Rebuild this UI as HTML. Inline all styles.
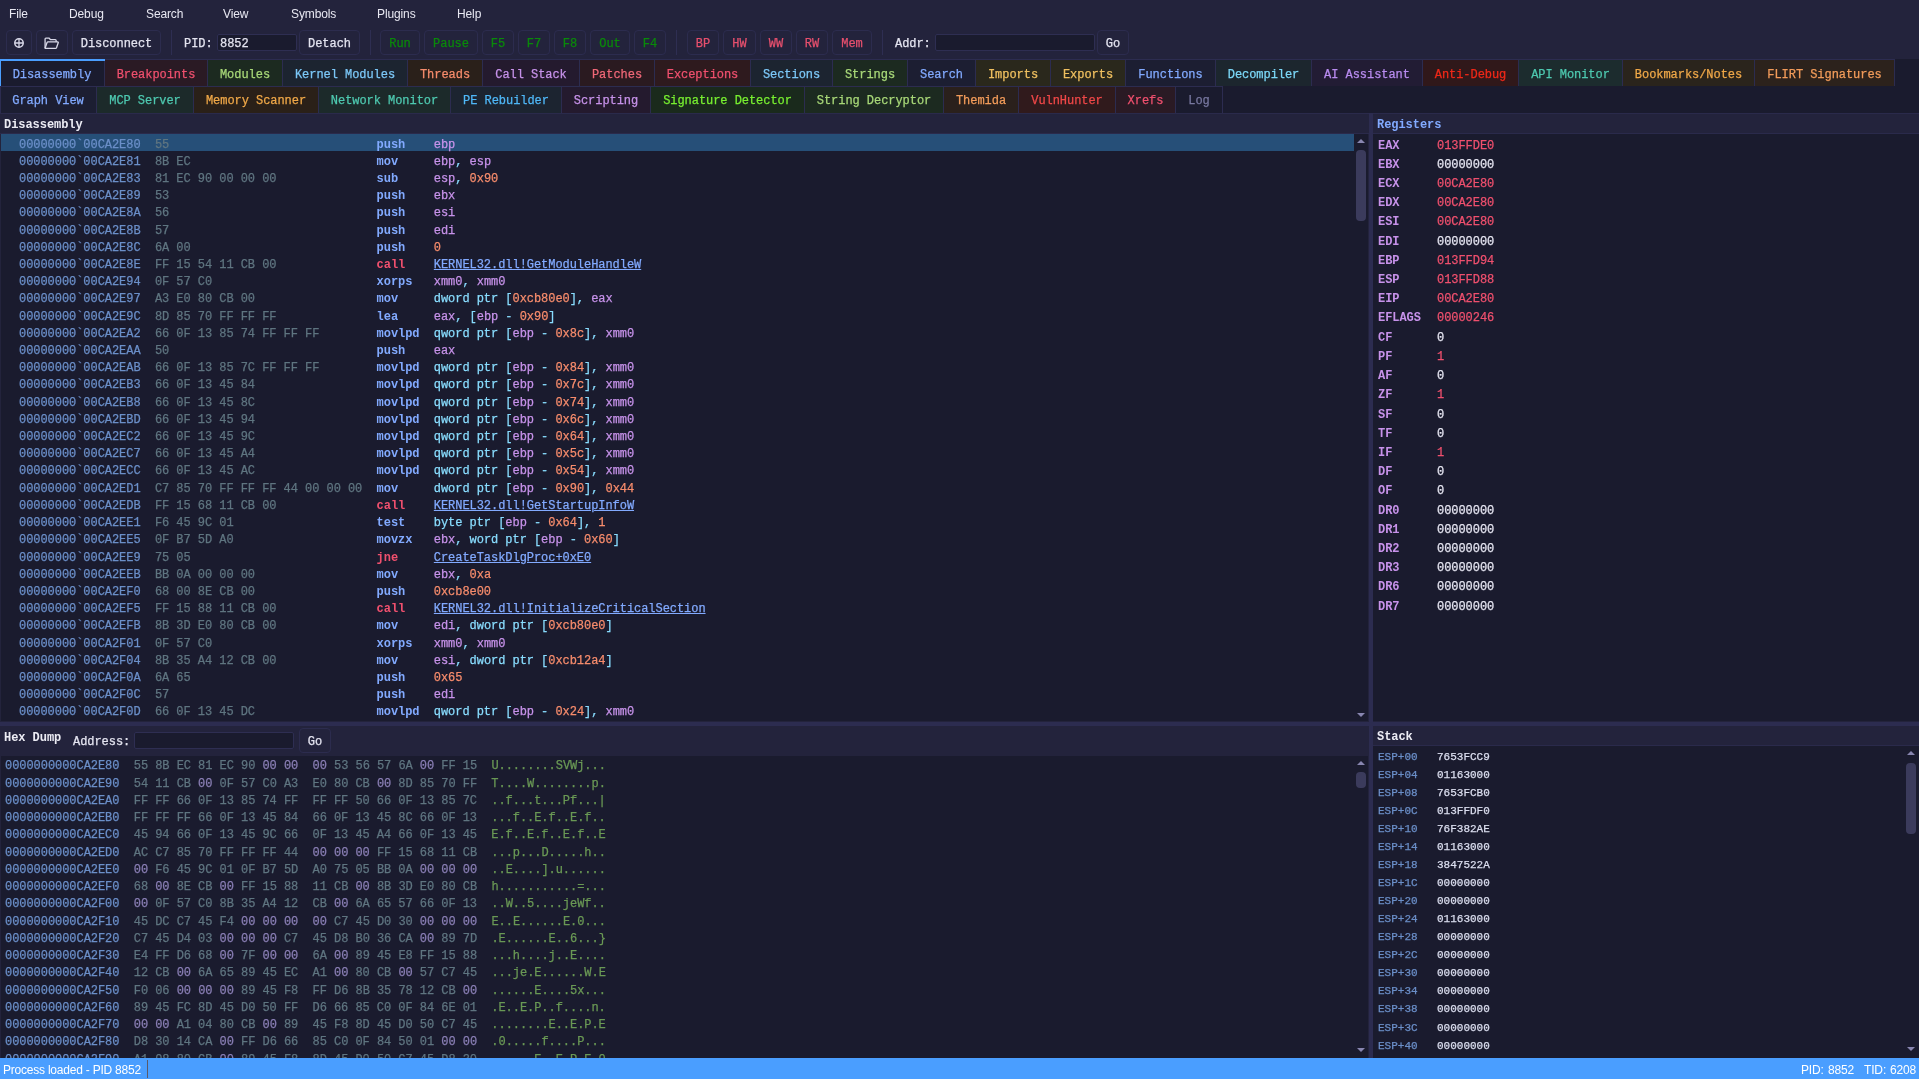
<!DOCTYPE html>
<html lang="en"><head><meta charset="utf-8"><title>Debugger</title>
<style>
*{box-sizing:border-box;margin:0;padding:0}
html,body{width:1919px;height:1079px;overflow:hidden;background:#23233c}
body{position:relative;font-family:"Liberation Mono", monospace;font-size:12px;color:#e4e4f0;letter-spacing:-0.05px;-webkit-text-stroke:0.25px}
i{font-style:normal}
#app{position:absolute;left:0;top:0;width:1919px;height:1079px;will-change:transform}
.abs{position:absolute}
#menu{position:absolute;left:0;top:0;width:1919px;height:28px;font-family:"Liberation Sans", sans-serif;font-size:12px;letter-spacing:-0.12px;color:#e8e8f2;-webkit-text-stroke:0}
#menu span{position:absolute;top:0;line-height:28px}
#tb{position:absolute;left:0;top:28px;width:1919px;height:31px}
.btn{position:absolute;top:2px;height:25px;border:1px solid #2c2c4e;border-radius:4px;line-height:27px;text-align:center;white-space:pre}
.sep{position:absolute;top:2px;width:1px;height:25px;background:#2e2e52}
.lbl{position:absolute;top:2px;line-height:29px;white-space:pre}
.inp{position:absolute;background:#1a1b2e;border:1px solid #2e2e52;border-radius:2px;line-height:19px;padding-left:2px;white-space:pre}
.g{color:#0a8a0a}
.rd{color:#e8506e}
#tabs{position:absolute;left:0;top:59px;width:1919px;height:55px;background:#1a1b2e}
.trow{position:absolute;left:0;display:flex;height:27px;border-top:1px solid #2c2c50}
.tab{height:26px;line-height:29px;text-align:center;border-right:1px solid #2c2c50;white-space:pre;flex:none}
.r1 .tab{line-height:31px}
.trow:not(.r1) .tab:first-child{box-shadow:inset 1px 0 0 #2c2c50}
.tab.act{position:relative;box-shadow:inset 1px 0 0 #4a9eff}
.tab.act:before{content:"";position:absolute;left:0;right:-1px;top:-1px;height:2px;background:#4a9eff}
.hdr{position:absolute;background:#23233c;border-top:1px solid #2a2a4b;border-bottom:1px solid #2a2a4b;font-weight:bold;white-space:pre}
b,.hdr,.bold{-webkit-text-stroke:0}
.pane{position:absolute;background:#1a1b2e;overflow:hidden}
.dr,.hr{position:absolute;left:0;height:17.21px;line-height:22px;white-space:pre}
.dr{width:1354px;padding-left:19px}
.dr.sel{background:#264f78}
.hr{padding-left:5px}
.a{color:#6b8fc9}
.b{color:#5f7580}
.z{color:#8a7fb5}
.s{color:#6a9955}
.m{color:#82aaff}
.mj{color:#f0506e}
.dr{color:#89ddff}
.r{color:#c792ea}
.n{color:#f78c6c}
.lk{color:#82aaff;text-decoration:underline;text-underline-offset:1px;text-decoration-thickness:1px}
.rr,.sr{position:absolute;white-space:pre}
.rr{left:1378px;height:19px;line-height:19px}
.rr b{color:#c792ea;position:absolute;left:0}
.rr span{position:absolute;left:59px}
.ch{color:#f0506e}
.nc{color:#e4e4f0}
.sr{left:1378px;height:18px;line-height:18px;font-size:11px;letter-spacing:0}
.sr i{position:absolute;left:0}
.sr span{position:absolute;left:59px;color:#dcdff0}
.split{position:absolute;background:#2c2c50}
.sb{position:absolute;width:14px;background:#1a1b2e}
.thumb{position:absolute;left:2px;width:10px;border-radius:4px;background:#3b3b5c}
.au,.ad{position:absolute;left:3px;width:0;height:0;border-left:4px solid transparent;border-right:4px solid transparent}
.au{border-bottom:4px solid #8886b0}
.ad{border-top:4px solid #8886b0}
#status{position:absolute;left:0;top:1058px;width:1919px;height:21px;background:#4a9eff;font-family:"Liberation Sans", sans-serif;font-size:12px;letter-spacing:-0.15px;color:#fff;line-height:24px;white-space:pre;-webkit-text-stroke:0}
</style></head>
<body><div id="app">
<div id="menu"><span style="left:9px">File</span><span style="left:69px">Debug</span><span style="left:146px">Search</span><span style="left:223px">View</span><span style="left:291px">Symbols</span><span style="left:377px">Plugins</span><span style="left:457px">Help</span></div>
<div id="tb">
<div class="btn" style="left:6px;width:26px"><svg width="12" height="12" viewBox="0 0 12 12" style="position:absolute;left:5.8px;top:5.8px" fill="none" stroke="#d8d8e8"><circle cx="6" cy="6" r="4.2" stroke-width="1.5"/><path d="M6 1.8v8.4M1.8 6h8.4" stroke-width="1.3"/></svg></div>
<div class="btn" style="left:36px;width:32px"><svg width="15.3" height="12.6" viewBox="0 0 17 14" style="position:absolute;left:6.6px;top:5.7px" fill="none" stroke="#d8d8e8" stroke-width="1.45" stroke-linejoin="round"><path d="M1.2 12.2V2.2q0-1 1-1h3.3l1.8 1.8h5.2q1 0 1 1v1.6"/><path d="M1.2 12.6l2.2-6.4q.3-.7 1-.7h10.8q.9 0 .6.9l-1.9 5.5q-.3.7-1 .7H1.2z"/></svg></div>
<div class="btn" style="left:72px;width:89px">Disconnect</div>
<div class="sep" style="left:171px"></div>
<div class="lbl" style="left:184px">PID:</div>
<div class="inp" style="left:217px;top:6px;width:80px;height:17px">8852</div>
<div class="btn" style="left:299px;width:61px">Detach</div>
<div class="sep" style="left:370px"></div>
<div class="btn g" style="left:380px;width:40px">Run</div>
<div class="btn g" style="left:424px;width:54px">Pause</div>
<div class="btn g" style="left:482px;width:32px">F5</div>
<div class="btn g" style="left:518px;width:32px">F7</div>
<div class="btn g" style="left:554px;width:32px">F8</div>
<div class="btn g" style="left:590px;width:40px">Out</div>
<div class="btn g" style="left:634px;width:32px">F4</div>
<div class="sep" style="left:676px"></div>
<div class="btn rd" style="left:687px;width:32px">BP</div>
<div class="btn rd" style="left:723px;width:33px">HW</div>
<div class="btn rd" style="left:760px;width:32px">WW</div>
<div class="btn rd" style="left:796px;width:32px">RW</div>
<div class="btn rd" style="left:832px;width:40px">Mem</div>
<div class="sep" style="left:882px"></div>
<div class="lbl" style="left:895px">Addr:</div>
<div class="inp" style="left:935px;top:6px;width:160px;height:17px"></div>
<div class="btn" style="left:1097px;width:32px">Go</div>
</div>
<div id="tabs">
<div class="trow r1" style="top:0"><div class="tab act" style="width:105px;color:#82aaff;background:#1a1b2e">Disassembly</div><div class="tab" style="width:103px;color:#f0506e;background:#2a1a24">Breakpoints</div><div class="tab" style="width:75px;color:#a8d878;background:#1c2a20">Modules</div><div class="tab" style="width:125px;color:#7cc8f8;background:#1c2430">Kernel Modules</div><div class="tab" style="width:75px;color:#f78c6c;background:#2a201a">Threads</div><div class="tab" style="width:97px;color:#c792ea;background:#241a2e">Call Stack</div><div class="tab" style="width:75px;color:#f06878;background:#2a1a20">Patches</div><div class="tab" style="width:96px;color:#f0506e;background:#2e1a1e">Exceptions</div><div class="tab" style="width:82px;color:#7cc8f8;background:#1c2430">Sections</div><div class="tab" style="width:75px;color:#a8d878;background:#1c2a20">Strings</div><div class="tab" style="width:68px;color:#82aaff;background:#1c1e32">Search</div><div class="tab" style="width:75px;color:#f0c060;background:#2a281c">Imports</div><div class="tab" style="width:75px;color:#f0c060;background:#2a281c">Exports</div><div class="tab" style="width:90px;color:#82aaff;background:#1c1e32">Functions</div><div class="tab" style="width:96px;color:#7cd8f8;background:#1c262e">Decompiler</div><div class="tab" style="width:111px;color:#b98cf0;background:#221c34">AI Assistant</div><div class="tab" style="width:96px;color:#f02818;background:#30181a">Anti-Debug</div><div class="tab" style="width:104px;color:#4ec9b0;background:#1c2c2e">API Monitor</div><div class="tab" style="width:132px;color:#f0a848;background:#2a241c">Bookmarks/Notes</div><div class="tab" style="width:140px;color:#f39c5a;background:#2c221c">FLIRT Signatures</div></div>
<div class="trow" style="top:27px"><div class="tab" style="width:97px;color:#82aaff;background:#1c1e32">Graph View</div><div class="tab" style="width:97px;color:#4ec9b0;background:#1c2a2a">MCP Server</div><div class="tab" style="width:125px;color:#f0a848;background:#2a2018">Memory Scanner</div><div class="tab" style="width:132px;color:#4ec9b0;background:#1c2a2a">Network Monitor</div><div class="tab" style="width:111px;color:#4fb8f8;background:#1c2430">PE Rebuilder</div><div class="tab" style="width:89px;color:#c792ea;background:#241a2e">Scripting</div><div class="tab" style="width:154px;color:#78f030;background:#1a2a1c">Signature Detector</div><div class="tab" style="width:139px;color:#a8d878;background:#1c2a20">String Decryptor</div><div class="tab" style="width:75px;color:#f39c5a;background:#2a201c">Themida</div><div class="tab" style="width:97px;color:#f04848;background:#301a1c">VulnHunter</div><div class="tab" style="width:60px;color:#f0506e;background:#2a1a24">Xrefs</div><div class="tab" style="width:47px;color:#7878a0;background:#1a1b2e">Log</div></div>
</div>

<!-- disassembly -->
<div class="hdr" style="left:0;top:113px;width:1369px;height:21px;line-height:22px;padding-left:4px;color:#ececf4">Disassembly</div>
<div class="pane" style="left:1px;top:134px;width:1367px;height:587px"></div>
<div class="abs" style="left:1px;top:134px;width:1353px;height:17px;background:#264f78"></div>
<div class="dr" style="top:133.50px"><i class="a">00000000`00CA2E80</i>  <i class="b">55                           </i>  <b class="m">push    </b><i class="r">ebp</i></div>
<div class="dr" style="top:150.71px"><i class="a">00000000`00CA2E81</i>  <i class="b">8B EC                        </i>  <b class="m">mov     </b><i class="r">ebp</i>, <i class="r">esp</i></div>
<div class="dr" style="top:167.92px"><i class="a">00000000`00CA2E83</i>  <i class="b">81 EC 90 00 00 00            </i>  <b class="m">sub     </b><i class="r">esp</i>, <i class="n">0x90</i></div>
<div class="dr" style="top:185.13px"><i class="a">00000000`00CA2E89</i>  <i class="b">53                           </i>  <b class="m">push    </b><i class="r">ebx</i></div>
<div class="dr" style="top:202.34px"><i class="a">00000000`00CA2E8A</i>  <i class="b">56                           </i>  <b class="m">push    </b><i class="r">esi</i></div>
<div class="dr" style="top:219.55px"><i class="a">00000000`00CA2E8B</i>  <i class="b">57                           </i>  <b class="m">push    </b><i class="r">edi</i></div>
<div class="dr" style="top:236.76px"><i class="a">00000000`00CA2E8C</i>  <i class="b">6A 00                        </i>  <b class="m">push    </b><i class="n">0</i></div>
<div class="dr" style="top:253.97px"><i class="a">00000000`00CA2E8E</i>  <i class="b">FF 15 54 11 CB 00            </i>  <b class="mj">call    </b><u class="lk">KERNEL32.dll!GetModuleHandleW</u></div>
<div class="dr" style="top:271.18px"><i class="a">00000000`00CA2E94</i>  <i class="b">0F 57 C0                     </i>  <b class="m">xorps   </b><i class="r">xmm0</i>, <i class="r">xmm0</i></div>
<div class="dr" style="top:288.39px"><i class="a">00000000`00CA2E97</i>  <i class="b">A3 E0 80 CB 00               </i>  <b class="m">mov     </b>dword ptr [<i class="n">0xcb80e0</i>], <i class="r">eax</i></div>
<div class="dr" style="top:305.60px"><i class="a">00000000`00CA2E9C</i>  <i class="b">8D 85 70 FF FF FF            </i>  <b class="m">lea     </b><i class="r">eax</i>, [<i class="r">ebp</i> - <i class="n">0x90</i>]</div>
<div class="dr" style="top:322.81px"><i class="a">00000000`00CA2EA2</i>  <i class="b">66 0F 13 85 74 FF FF FF      </i>  <b class="m">movlpd  </b>qword ptr [<i class="r">ebp</i> - <i class="n">0x8c</i>], <i class="r">xmm0</i></div>
<div class="dr" style="top:340.02px"><i class="a">00000000`00CA2EAA</i>  <i class="b">50                           </i>  <b class="m">push    </b><i class="r">eax</i></div>
<div class="dr" style="top:357.23px"><i class="a">00000000`00CA2EAB</i>  <i class="b">66 0F 13 85 7C FF FF FF      </i>  <b class="m">movlpd  </b>qword ptr [<i class="r">ebp</i> - <i class="n">0x84</i>], <i class="r">xmm0</i></div>
<div class="dr" style="top:374.44px"><i class="a">00000000`00CA2EB3</i>  <i class="b">66 0F 13 45 84               </i>  <b class="m">movlpd  </b>qword ptr [<i class="r">ebp</i> - <i class="n">0x7c</i>], <i class="r">xmm0</i></div>
<div class="dr" style="top:391.65px"><i class="a">00000000`00CA2EB8</i>  <i class="b">66 0F 13 45 8C               </i>  <b class="m">movlpd  </b>qword ptr [<i class="r">ebp</i> - <i class="n">0x74</i>], <i class="r">xmm0</i></div>
<div class="dr" style="top:408.86px"><i class="a">00000000`00CA2EBD</i>  <i class="b">66 0F 13 45 94               </i>  <b class="m">movlpd  </b>qword ptr [<i class="r">ebp</i> - <i class="n">0x6c</i>], <i class="r">xmm0</i></div>
<div class="dr" style="top:426.07px"><i class="a">00000000`00CA2EC2</i>  <i class="b">66 0F 13 45 9C               </i>  <b class="m">movlpd  </b>qword ptr [<i class="r">ebp</i> - <i class="n">0x64</i>], <i class="r">xmm0</i></div>
<div class="dr" style="top:443.28px"><i class="a">00000000`00CA2EC7</i>  <i class="b">66 0F 13 45 A4               </i>  <b class="m">movlpd  </b>qword ptr [<i class="r">ebp</i> - <i class="n">0x5c</i>], <i class="r">xmm0</i></div>
<div class="dr" style="top:460.49px"><i class="a">00000000`00CA2ECC</i>  <i class="b">66 0F 13 45 AC               </i>  <b class="m">movlpd  </b>qword ptr [<i class="r">ebp</i> - <i class="n">0x54</i>], <i class="r">xmm0</i></div>
<div class="dr" style="top:477.70px"><i class="a">00000000`00CA2ED1</i>  <i class="b">C7 85 70 FF FF FF 44 00 00 00</i>  <b class="m">mov     </b>dword ptr [<i class="r">ebp</i> - <i class="n">0x90</i>], <i class="n">0x44</i></div>
<div class="dr" style="top:494.91px"><i class="a">00000000`00CA2EDB</i>  <i class="b">FF 15 68 11 CB 00            </i>  <b class="mj">call    </b><u class="lk">KERNEL32.dll!GetStartupInfoW</u></div>
<div class="dr" style="top:512.12px"><i class="a">00000000`00CA2EE1</i>  <i class="b">F6 45 9C 01                  </i>  <b class="m">test    </b>byte ptr [<i class="r">ebp</i> - <i class="n">0x64</i>], <i class="n">1</i></div>
<div class="dr" style="top:529.33px"><i class="a">00000000`00CA2EE5</i>  <i class="b">0F B7 5D A0                  </i>  <b class="m">movzx   </b><i class="r">ebx</i>, word ptr [<i class="r">ebp</i> - <i class="n">0x60</i>]</div>
<div class="dr" style="top:546.54px"><i class="a">00000000`00CA2EE9</i>  <i class="b">75 05                        </i>  <b class="mj">jne     </b><u class="lk">CreateTaskDlgProc+0xE0</u></div>
<div class="dr" style="top:563.75px"><i class="a">00000000`00CA2EEB</i>  <i class="b">BB 0A 00 00 00               </i>  <b class="m">mov     </b><i class="r">ebx</i>, <i class="n">0xa</i></div>
<div class="dr" style="top:580.96px"><i class="a">00000000`00CA2EF0</i>  <i class="b">68 00 8E CB 00               </i>  <b class="m">push    </b><i class="n">0xcb8e00</i></div>
<div class="dr" style="top:598.17px"><i class="a">00000000`00CA2EF5</i>  <i class="b">FF 15 88 11 CB 00            </i>  <b class="mj">call    </b><u class="lk">KERNEL32.dll!InitializeCriticalSection</u></div>
<div class="dr" style="top:615.38px"><i class="a">00000000`00CA2EFB</i>  <i class="b">8B 3D E0 80 CB 00            </i>  <b class="m">mov     </b><i class="r">edi</i>, dword ptr [<i class="n">0xcb80e0</i>]</div>
<div class="dr" style="top:632.59px"><i class="a">00000000`00CA2F01</i>  <i class="b">0F 57 C0                     </i>  <b class="m">xorps   </b><i class="r">xmm0</i>, <i class="r">xmm0</i></div>
<div class="dr" style="top:649.80px"><i class="a">00000000`00CA2F04</i>  <i class="b">8B 35 A4 12 CB 00            </i>  <b class="m">mov     </b><i class="r">esi</i>, dword ptr [<i class="n">0xcb12a4</i>]</div>
<div class="dr" style="top:667.01px"><i class="a">00000000`00CA2F0A</i>  <i class="b">6A 65                        </i>  <b class="m">push    </b><i class="n">0x65</i></div>
<div class="dr" style="top:684.22px"><i class="a">00000000`00CA2F0C</i>  <i class="b">57                           </i>  <b class="m">push    </b><i class="r">edi</i></div>
<div class="dr" style="top:701.43px"><i class="a">00000000`00CA2F0D</i>  <i class="b">66 0F 13 45 DC               </i>  <b class="m">movlpd  </b>qword ptr [<i class="r">ebp</i> - <i class="n">0x24</i>], <i class="r">xmm0</i></div>
<div class="sb" style="left:1354px;top:134px;height:587px"><div class="au" style="top:5px"></div><div class="thumb" style="top:16px;height:71px"></div><div class="ad" style="top:579px"></div></div>

<!-- registers -->
<div class="hdr" style="left:1373px;top:113px;width:546px;height:21px;line-height:22px;padding-left:4px;color:#82aaff">Registers</div>
<div class="pane" style="left:1373px;top:134px;width:546px;height:587px"></div>
<div class="rr" style="top:136.60px"><b>EAX</b><span class="ch">013FFDE0</span></div>
<div class="rr" style="top:155.81px"><b>EBX</b><span class="nc">00000000</span></div>
<div class="rr" style="top:175.02px"><b>ECX</b><span class="ch">00CA2E80</span></div>
<div class="rr" style="top:194.23px"><b>EDX</b><span class="ch">00CA2E80</span></div>
<div class="rr" style="top:213.44px"><b>ESI</b><span class="ch">00CA2E80</span></div>
<div class="rr" style="top:232.65px"><b>EDI</b><span class="nc">00000000</span></div>
<div class="rr" style="top:251.86px"><b>EBP</b><span class="ch">013FFD94</span></div>
<div class="rr" style="top:271.07px"><b>ESP</b><span class="ch">013FFD88</span></div>
<div class="rr" style="top:290.28px"><b>EIP</b><span class="ch">00CA2E80</span></div>
<div class="rr" style="top:309.49px"><b>EFLAGS</b><span class="ch">00000246</span></div>
<div class="rr" style="top:328.70px"><b>CF</b><span class="nc">0</span></div>
<div class="rr" style="top:347.91px"><b>PF</b><span class="ch">1</span></div>
<div class="rr" style="top:367.12px"><b>AF</b><span class="nc">0</span></div>
<div class="rr" style="top:386.33px"><b>ZF</b><span class="ch">1</span></div>
<div class="rr" style="top:405.54px"><b>SF</b><span class="nc">0</span></div>
<div class="rr" style="top:424.75px"><b>TF</b><span class="nc">0</span></div>
<div class="rr" style="top:443.96px"><b>IF</b><span class="ch">1</span></div>
<div class="rr" style="top:463.17px"><b>DF</b><span class="nc">0</span></div>
<div class="rr" style="top:482.38px"><b>OF</b><span class="nc">0</span></div>
<div class="rr" style="top:501.59px"><b>DR0</b><span class="nc">00000000</span></div>
<div class="rr" style="top:520.80px"><b>DR1</b><span class="nc">00000000</span></div>
<div class="rr" style="top:540.01px"><b>DR2</b><span class="nc">00000000</span></div>
<div class="rr" style="top:559.22px"><b>DR3</b><span class="nc">00000000</span></div>
<div class="rr" style="top:578.43px"><b>DR6</b><span class="nc">00000000</span></div>
<div class="rr" style="top:597.64px"><b>DR7</b><span class="nc">00000000</span></div>

<!-- splitters -->
<div class="split" style="left:1369px;top:113px;width:4px;height:945px"></div>
<div class="split" style="left:0;top:722px;width:1919px;height:4px"></div>

<!-- hex dump -->
<div class="hdr" style="left:0;top:726px;width:1369px;height:30px;border:0"></div>
<div class="abs" style="left:4px;top:728px;line-height:21px;font-weight:bold;-webkit-text-stroke:0;color:#ececf4;white-space:pre">Hex Dump</div>
<div class="abs" style="left:73px;top:732px;line-height:21px;white-space:pre">Address:</div>
<div class="inp" style="left:134px;top:732px;width:160px;height:17px"></div>
<div class="btn" style="left:299px;top:728px;width:32px;height:25px;line-height:26px">Go</div>
<div class="pane" style="left:1px;top:756px;width:1367px;height:302px">
</div>
<div class="abs" style="left:0;top:0;width:1354px;height:1058px;overflow:hidden;pointer-events:none">
<div class="hr" style="top:755.40px"><i class="a">0000000000CA2E80</i>  <i class="b">55 8B EC 81 EC 90 <i class="z">00</i> <i class="z">00</i>  <i class="z">00</i> 53 56 57 6A <i class="z">00</i> FF 15</i>  <i class="s">U........SVWj...</i></div>
<div class="hr" style="top:772.65px"><i class="a">0000000000CA2E90</i>  <i class="b">54 11 CB <i class="z">00</i> 0F 57 C0 A3  E0 80 CB <i class="z">00</i> 8D 85 70 FF</i>  <i class="s">T....W........p.</i></div>
<div class="hr" style="top:789.90px"><i class="a">0000000000CA2EA0</i>  <i class="b">FF FF 66 0F 13 85 74 FF  FF FF 50 66 0F 13 85 7C</i>  <i class="s">..f...t...Pf...|</i></div>
<div class="hr" style="top:807.15px"><i class="a">0000000000CA2EB0</i>  <i class="b">FF FF FF 66 0F 13 45 84  66 0F 13 45 8C 66 0F 13</i>  <i class="s">...f..E.f..E.f..</i></div>
<div class="hr" style="top:824.40px"><i class="a">0000000000CA2EC0</i>  <i class="b">45 94 66 0F 13 45 9C 66  0F 13 45 A4 66 0F 13 45</i>  <i class="s">E.f..E.f..E.f..E</i></div>
<div class="hr" style="top:841.65px"><i class="a">0000000000CA2ED0</i>  <i class="b">AC C7 85 70 FF FF FF 44  <i class="z">00</i> <i class="z">00</i> <i class="z">00</i> FF 15 68 11 CB</i>  <i class="s">...p...D.....h..</i></div>
<div class="hr" style="top:858.90px"><i class="a">0000000000CA2EE0</i>  <i class="b"><i class="z">00</i> F6 45 9C 01 0F B7 5D  A0 75 05 BB 0A <i class="z">00</i> <i class="z">00</i> <i class="z">00</i></i>  <i class="s">..E....].u......</i></div>
<div class="hr" style="top:876.15px"><i class="a">0000000000CA2EF0</i>  <i class="b">68 <i class="z">00</i> 8E CB <i class="z">00</i> FF 15 88  11 CB <i class="z">00</i> 8B 3D E0 80 CB</i>  <i class="s">h...........=...</i></div>
<div class="hr" style="top:893.40px"><i class="a">0000000000CA2F00</i>  <i class="b"><i class="z">00</i> 0F 57 C0 8B 35 A4 12  CB <i class="z">00</i> 6A 65 57 66 0F 13</i>  <i class="s">..W..5....jeWf..</i></div>
<div class="hr" style="top:910.65px"><i class="a">0000000000CA2F10</i>  <i class="b">45 DC C7 45 F4 <i class="z">00</i> <i class="z">00</i> <i class="z">00</i>  <i class="z">00</i> C7 45 D0 30 <i class="z">00</i> <i class="z">00</i> <i class="z">00</i></i>  <i class="s">E..E......E.0...</i></div>
<div class="hr" style="top:927.90px"><i class="a">0000000000CA2F20</i>  <i class="b">C7 45 D4 03 <i class="z">00</i> <i class="z">00</i> <i class="z">00</i> C7  45 D8 B0 36 CA <i class="z">00</i> 89 7D</i>  <i class="s">.E......E..6...}</i></div>
<div class="hr" style="top:945.15px"><i class="a">0000000000CA2F30</i>  <i class="b">E4 FF D6 68 <i class="z">00</i> 7F <i class="z">00</i> <i class="z">00</i>  6A <i class="z">00</i> 89 45 E8 FF 15 88</i>  <i class="s">...h....j..E....</i></div>
<div class="hr" style="top:962.40px"><i class="a">0000000000CA2F40</i>  <i class="b">12 CB <i class="z">00</i> 6A 65 89 45 EC  A1 <i class="z">00</i> 80 CB <i class="z">00</i> 57 C7 45</i>  <i class="s">...je.E......W.E</i></div>
<div class="hr" style="top:979.65px"><i class="a">0000000000CA2F50</i>  <i class="b">F0 06 <i class="z">00</i> <i class="z">00</i> <i class="z">00</i> 89 45 F8  FF D6 8B 35 78 12 CB <i class="z">00</i></i>  <i class="s">......E....5x...</i></div>
<div class="hr" style="top:996.90px"><i class="a">0000000000CA2F60</i>  <i class="b">89 45 FC 8D 45 D0 50 FF  D6 66 85 C0 0F 84 6E 01</i>  <i class="s">.E..E.P..f....n.</i></div>
<div class="hr" style="top:1014.15px"><i class="a">0000000000CA2F70</i>  <i class="b"><i class="z">00</i> <i class="z">00</i> A1 04 80 CB <i class="z">00</i> 89  45 F8 8D 45 D0 50 C7 45</i>  <i class="s">........E..E.P.E</i></div>
<div class="hr" style="top:1031.40px"><i class="a">0000000000CA2F80</i>  <i class="b">D8 30 14 CA <i class="z">00</i> FF D6 66  85 C0 0F 84 50 01 <i class="z">00</i> <i class="z">00</i></i>  <i class="s">.0.....f....P...</i></div>
<div class="hr" style="top:1048.65px"><i class="a">0000000000CA2F90</i>  <i class="b">A1 08 80 CB <i class="z">00</i> 89 45 F8  8D 45 D0 50 C7 45 D8 30</i>  <i class="s">......E..E.P.E.0</i></div>
</div>
<div class="sb" style="left:1354px;top:756px;height:302px"><div class="au" style="top:5px"></div><div class="thumb" style="top:16px;height:16px"></div><div class="ad" style="top:292px"></div></div>

<!-- stack -->
<div class="hdr" style="left:1373px;top:726px;width:546px;height:20px;line-height:23px;padding-left:4px;border-top:0;color:#ececf4">Stack</div>
<div class="pane" style="left:1373px;top:746px;width:546px;height:312px"></div>
<div class="sr" style="top:747.60px"><i class="a">ESP+00</i><span>7653FCC9</span></div>
<div class="sr" style="top:765.66px"><i class="a">ESP+04</i><span>01163000</span></div>
<div class="sr" style="top:783.72px"><i class="a">ESP+08</i><span>7653FCB0</span></div>
<div class="sr" style="top:801.78px"><i class="a">ESP+0C</i><span>013FFDF0</span></div>
<div class="sr" style="top:819.84px"><i class="a">ESP+10</i><span>76F382AE</span></div>
<div class="sr" style="top:837.90px"><i class="a">ESP+14</i><span>01163000</span></div>
<div class="sr" style="top:855.96px"><i class="a">ESP+18</i><span>3847522A</span></div>
<div class="sr" style="top:874.02px"><i class="a">ESP+1C</i><span>00000000</span></div>
<div class="sr" style="top:892.08px"><i class="a">ESP+20</i><span>00000000</span></div>
<div class="sr" style="top:910.14px"><i class="a">ESP+24</i><span>01163000</span></div>
<div class="sr" style="top:928.20px"><i class="a">ESP+28</i><span>00000000</span></div>
<div class="sr" style="top:946.26px"><i class="a">ESP+2C</i><span>00000000</span></div>
<div class="sr" style="top:964.32px"><i class="a">ESP+30</i><span>00000000</span></div>
<div class="sr" style="top:982.38px"><i class="a">ESP+34</i><span>00000000</span></div>
<div class="sr" style="top:1000.44px"><i class="a">ESP+38</i><span>00000000</span></div>
<div class="sr" style="top:1018.50px"><i class="a">ESP+3C</i><span>00000000</span></div>
<div class="sr" style="top:1036.56px"><i class="a">ESP+40</i><span>00000000</span></div>
<div class="sb" style="left:1904px;top:746px;height:312px"><div class="au" style="top:5px"></div><div class="thumb" style="top:17px;height:71px"></div><div class="ad" style="top:301px"></div></div>

<div id="status"><span style="position:absolute;left:3px;letter-spacing:-0.22px">Process loaded - PID 8852</span><span style="position:absolute;left:147px;top:2px;width:1px;height:18px;background:#5a5a6a"></span><span style="position:absolute;left:1801px">PID:</span><span style="position:absolute;left:1828px">8852</span><span style="position:absolute;left:1864px">TID:</span><span style="position:absolute;left:1890px">6208</span></div>
</div></body></html>
